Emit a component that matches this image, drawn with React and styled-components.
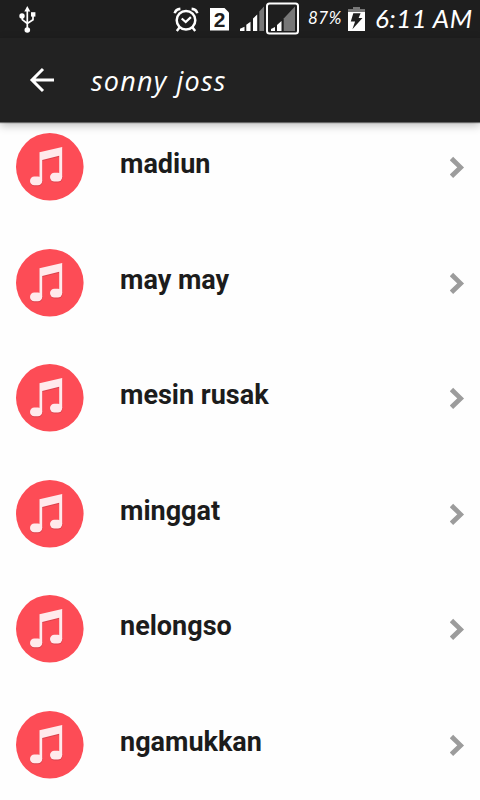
import React from "react"
import styled, { createGlobalStyle } from "styled-components"

const SONGS = [
  "madiun",
  "may may",
  "mesin rusak",
  "minggat",
  "nelongso",
  "ngamukkan",
]

const GlobalStyle = createGlobalStyle`
  * {
    box-sizing: border-box;
  }
  body {
    margin: 0;
    background: #fefefe;
    overflow: hidden;
  }
`

const Screen = styled.div`
  display: flex;
  flex-direction: column;
  width: 480px;
  height: 800px;
  overflow: hidden;
  background: #fefefe;
`

const StatusBar = styled.header`
  display: flex;
  flex: none;
  align-items: center;
  height: 38px;
  padding-left: 18px;
  background: #1e1e1e;
  color: #fff;
`

const StatusIcon = styled.svg`
  flex: none;
  display: block;
  margin-left: ${props => props.$gap || 0}px;
`

const StatusText = styled.span`
  flex: none;
  width: ${props => props.$width}px;
  margin-left: ${props => props.$gap}px;
  font-family: Lato, sans-serif;
  font-style: italic;
  font-size: ${props => props.$size}px;
  letter-spacing: ${props => props.$spacing || 0}px;
  line-height: 36px;
  padding-bottom: 2px;
  white-space: nowrap;
`

const AppBar = styled.nav`
  display: flex;
  flex: none;
  align-items: center;
  height: 84px;
  padding-left: 28px;
  background: #222;
  color: #fff;
  z-index: 1;
  box-shadow: 0 1px 1px rgba(0, 0, 0, 0.5), 0 3px 9px rgba(0, 0, 0, 0.28);
`

const BackButton = styled.button`
  display: flex;
  padding: 0;
  border: 0;
  background: none;
  color: inherit;
`

const Title = styled.h1`
  margin: 0 0 0 35px;
  padding-top: 1px;
  font-family: "Open Sans", sans-serif;
  font-size: 27px;
  font-style: italic;
  font-weight: 500;
  letter-spacing: 1.2px;
  word-spacing: 1px;
  line-height: 83px;
`

const List = styled.ul`
  flex: none;
  margin: -12.75px 0 0;
  padding: 0;
  list-style: none;
`

const Row = styled.li`
  display: flex;
  align-items: center;
  height: 115.5px;
  padding: 0 14px 0 15px;
`

const SongTitle = styled.span`
  flex: 1;
  margin-left: 35px;
  padding-bottom: 5.8px;
  color: #1c1c1c;
  font-family: Roboto, sans-serif;
  font-size: 27px;
  font-weight: 700;
  line-height: 32px;
`

const UsbIcon = () => (
  <StatusIcon width="19" height="28" viewBox="18 5 19 28" fill="none">
    <path
      d="M27.3 11V28M22.3 16v3.7l5 3.8M33 15v4.7l-5.7 3.8"
      stroke="#fff"
      strokeWidth="1.7"
    />
    <path d="M27.3 6l3 5.5h-6z" fill="#fff" />
    <circle cx="22" cy="16" r="2.7" fill="#fff" />
    <path d="M31 12.2h4.4v4.4H31z" fill="#fff" />
    <circle cx="27.3" cy="30" r="2.8" fill="#fff" />
  </StatusIcon>
)

const AlarmIcon = () => (
  <StatusIcon $gap={136} width="26" height="28" viewBox="173 5 26 28" fill="none">
    <g stroke="#fff">
      <circle cx="186" cy="20.3" r="9.3" strokeWidth="2.5" />
      <path d="M181.7 18.5l4 3.6 5.2-5" strokeWidth="2.2" />
      <path
        d="M174.7 13.3q1-4 5.7-4.4M197.3 13.3q-1-4-5.7-4.4"
        strokeWidth="2.6"
      />
      <path d="M179.5 27.5l-2.7 3.5M192.5 27.5l2.7 3.5" strokeWidth="2.4" />
    </g>
  </StatusIcon>
)

const SimBadge = styled.span`
  flex: none;
  width: 19px;
  height: 23px;
  margin-left: 11px;
  background: #fff;
  clip-path: polygon(0 0, 14px 0, 100% 5px, 100% 100%, 0 100%);
  color: #1e1e1e;
  font: 700 21px/24px "Liberation Sans", sans-serif;
  text-align: center;
`

const SignalIcons = () => (
  <StatusIcon $gap={10} width="61" height="34" viewBox="239 2 61 34" fill="none">
    <path
      d="M240 31v-2.3l4.5-2V31zM246.3 31v-6.3l4.2-3V31zM253 31V18.5l4.2-4V31z"
      fill="#fff"
    />
    <path d="M259.3 31V11.5l4.7-5V31z" fill="#777" />
    <rect x="267" y="3.5" width="31" height="30" rx="2.5" stroke="#fff" strokeWidth="2" />
    <path d="M271 31v-2l4-2v4zM277 31v-6l4.5-4v10z" fill="#fff" />
    <path d="M283.7 31V18.5L295 6.5V31z" fill="#777" />
  </StatusIcon>
)

const BatteryIcon = () => (
  <StatusIcon $gap={4} width="17" height="26" viewBox="348 5 17 26">
    <path d="M353 6h7v2h5v3h-17V8h5z" fill="#777" />
    <path d="M348 11h17v19h-17z" fill="#fff" />
    <path d="M353.3 12.3h7.3l-2 4.7h3.9l-10.1 11.3 2.7-7.7h-4.3z" fill="#1e1e1e" />
  </StatusIcon>
)

const BackIcon = () => (
  <svg width="28" height="26" viewBox="28 67 28 26" fill="none">
    <path d="M54 80H32M43 69L32 80l11 11" stroke="#fff" strokeWidth="3" />
  </svg>
)

const MusicIcon = styled.svg`
  flex: none;
  filter: blur(0.4px);
`

const NoteShape = () => (
  <>
    <path d="M24.5 20.3L47.2 15v30h-3V23.7L27.2 28v21h-2.7z" />
    <rect x="15" y="44.6" width="12.2" height="8.6" rx="4.3" />
    <rect x="35" y="40.7" width="12.2" height="8.8" rx="4.4" />
  </>
)

const MusicNote = () => (
  <MusicIcon width="70" height="70" viewBox="0 0 70 70">
    <circle cx="34.8" cy="34.8" r="33.8" fill="#fd4c56" />
    <g fill="#bf3944" opacity="0.55" transform="translate(0.2 1)">
      <NoteShape />
    </g>
    <g fill="#ffeaec">
      <NoteShape />
    </g>
  </MusicIcon>
)

const ChevronIcon = styled.svg`
  flex: none;
  filter: blur(0.4px);
`

const Chevron = () => (
  <ChevronIcon width="16" height="22" viewBox="450 157 16 22" fill="none">
    <path
      d="M453.2 161.2l7.4 7.2-7.4 7.2"
      stroke="#9c9c9c"
      strokeWidth="4.8"
      strokeLinecap="square"
    />
  </ChevronIcon>
)

const App = () => (
  <>
    <GlobalStyle />
    <Screen>
      <StatusBar>
        <UsbIcon />
        <AlarmIcon />
        <SimBadge>2</SimBadge>
        <SignalIcons />
        <StatusText $gap={8} $width={36} $size={17} $spacing={0.5}>
          87%
        </StatusText>
        <BatteryIcon />
        <StatusText $gap={10} $width={100} $size={26} $spacing={0.4}>
          6:11 AM
        </StatusText>
      </StatusBar>
      <AppBar>
        <BackButton aria-label="Back">
          <BackIcon />
        </BackButton>
        <Title>sonny joss</Title>
      </AppBar>
      <List>
        {SONGS.map(title => (
          <Row key={title}>
            <MusicNote />
            <SongTitle>{title}</SongTitle>
            <Chevron />
          </Row>
        ))}
      </List>
    </Screen>
  </>
)

export default App
